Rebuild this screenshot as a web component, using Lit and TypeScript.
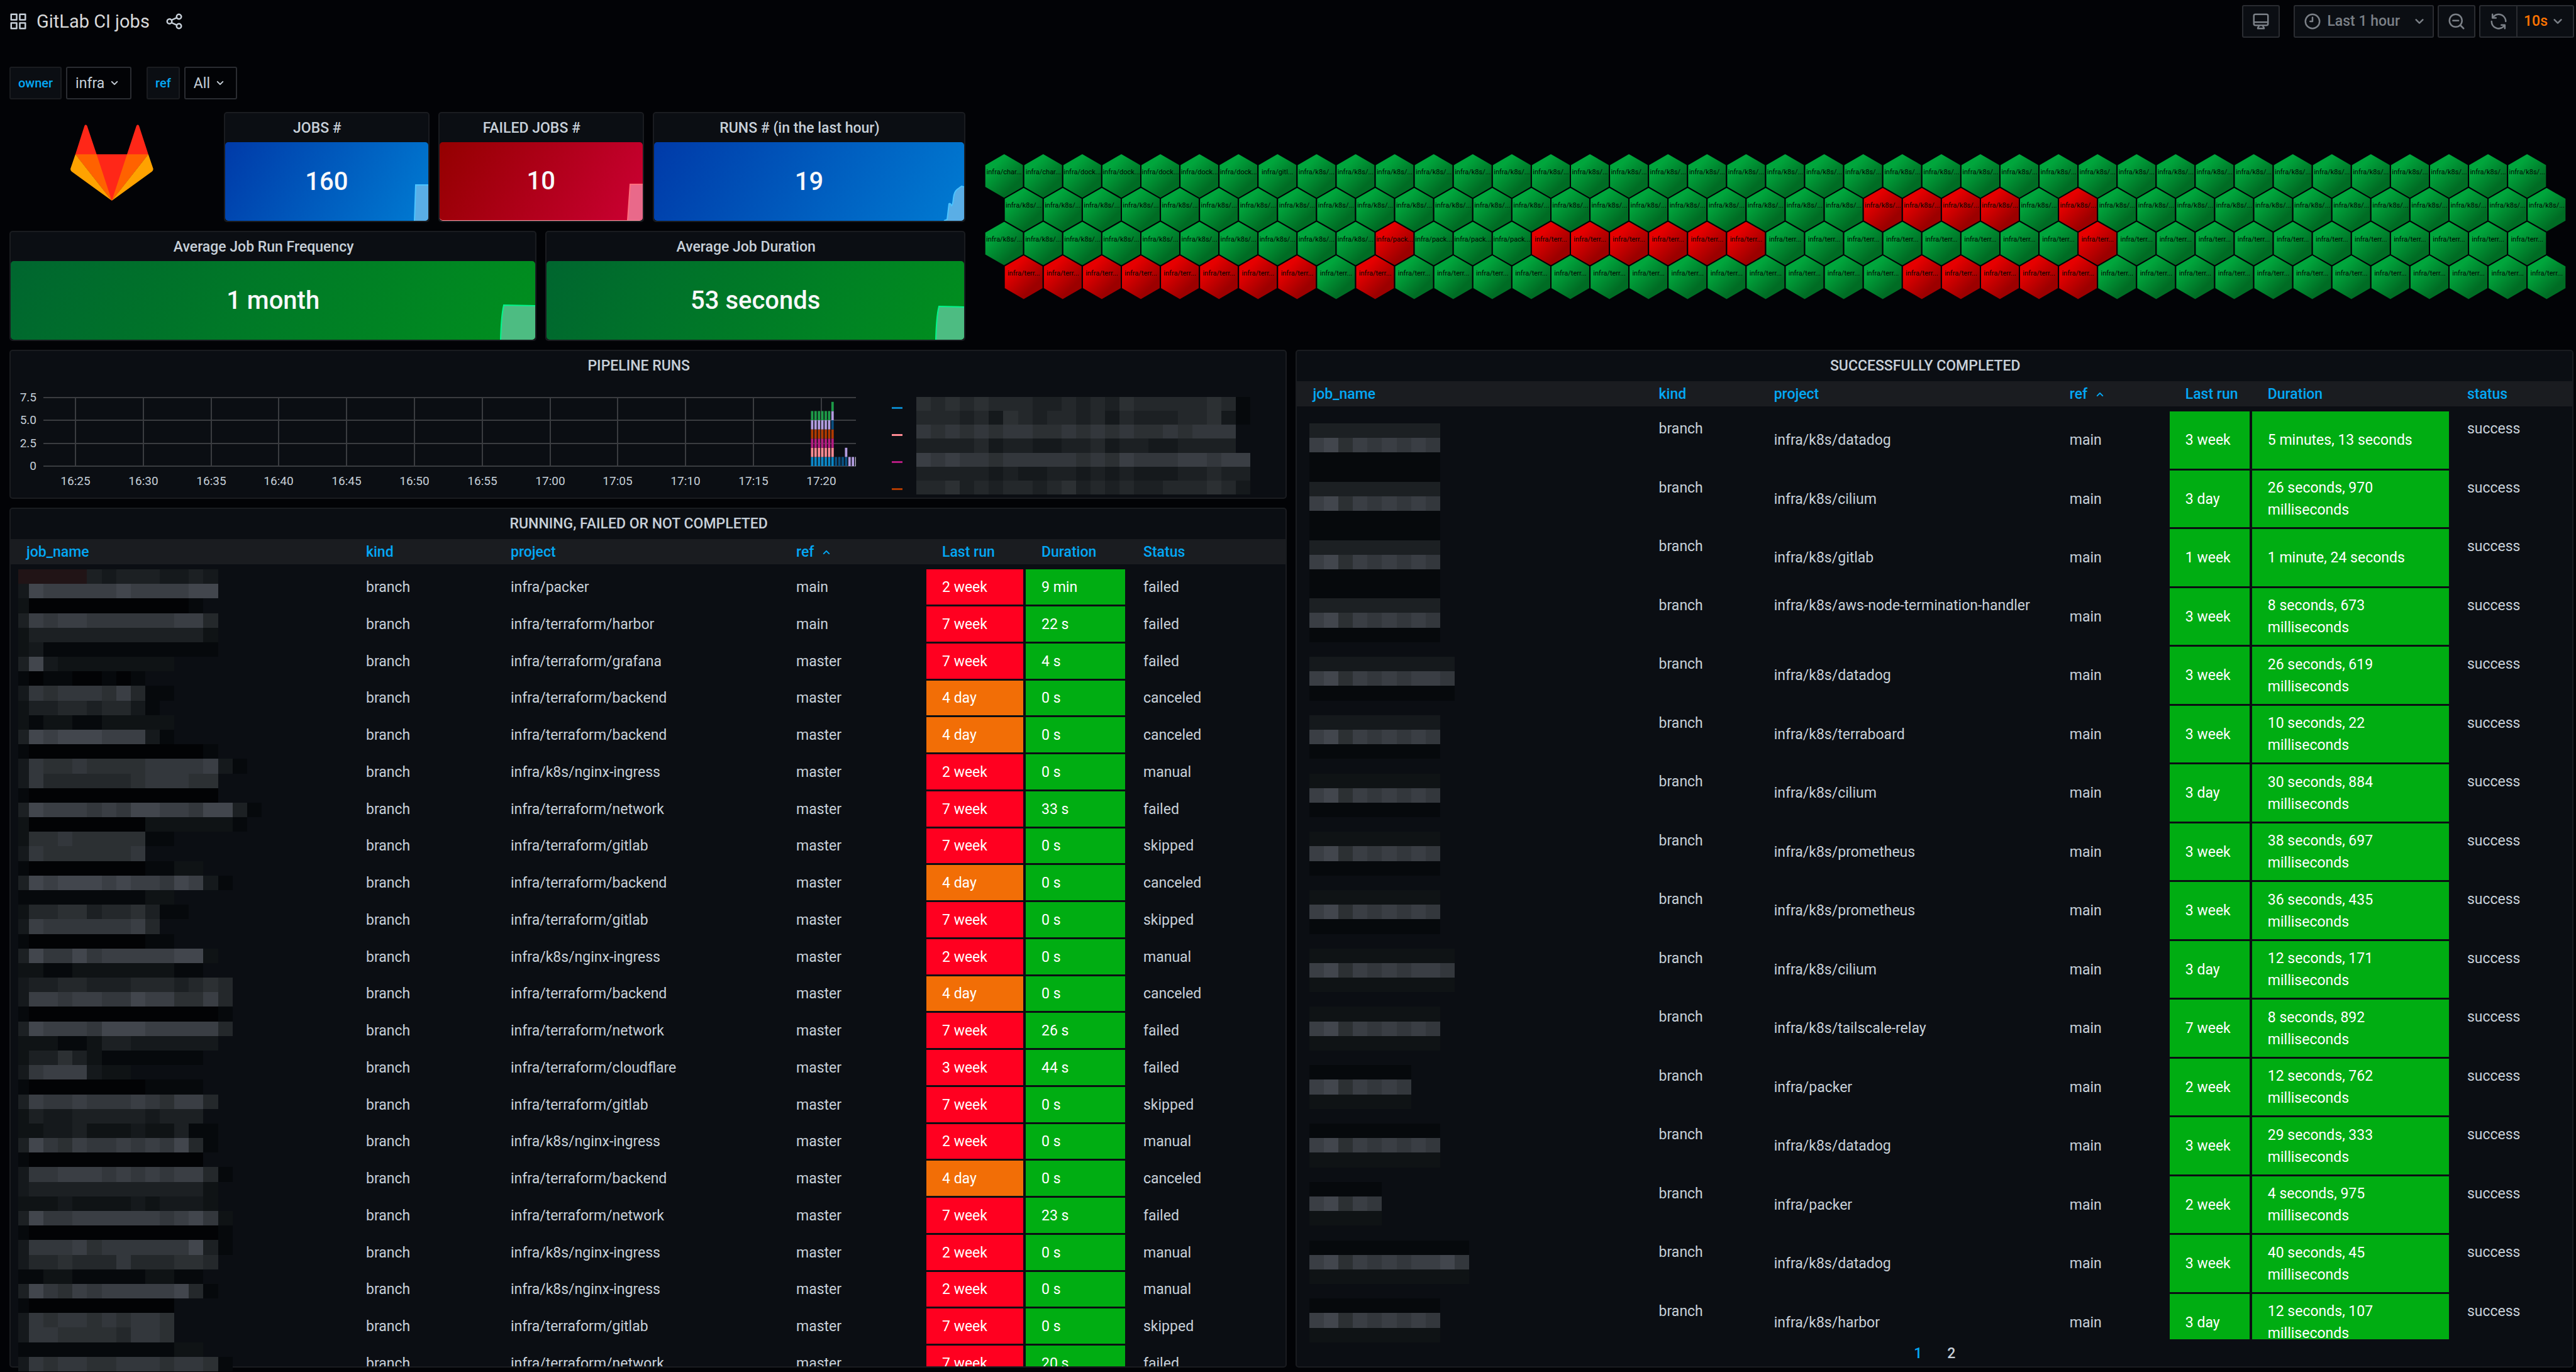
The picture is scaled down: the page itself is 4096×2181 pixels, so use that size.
import { LitElement, html, svg, css, nothing } from "lit";
import { customElement, property } from "lit/decorators.js";
import { classMap } from "lit/directives/class-map.js";
import { styleMap } from "lit/directives/style-map.js";

/* ---------- icons ---------- */

const ICONS: Record<string, unknown> = {
  apps: svg`<path fill="currentColor" d="M10,13H3a1,1,0,0,0-1,1v7a1,1,0,0,0,1,1h7a1,1,0,0,0,1-1V14A1,1,0,0,0,10,13ZM9,20H4V15H9ZM21,2H14a1,1,0,0,0-1,1v7a1,1,0,0,0,1,1h7a1,1,0,0,0,1-1V3A1,1,0,0,0,21,2ZM20,9H15V4h5Zm1,4H14a1,1,0,0,0-1,1v7a1,1,0,0,0,1,1h7a1,1,0,0,0,1-1V14A1,1,0,0,0,21,13Zm-1,7H15V15h5ZM10,2H3A1,1,0,0,0,2,3v7a1,1,0,0,0,1,1h7a1,1,0,0,0,1-1V3A1,1,0,0,0,10,2ZM9,9H4V4H9Z"/>`,
  share: svg`<path fill="currentColor" d="M18,14a4,4,0,0,0-3.08,1.48l-5.1-2.35a3.64,3.64,0,0,0,0-2.26l5.1-2.35A4,4,0,1,0,14,6a4.17,4.17,0,0,0,.07.71L8.79,9.14a4,4,0,1,0,0,5.72l5.28,2.43A4.17,4.17,0,0,0,14,18a4,4,0,1,0,4-4ZM18,4a2,2,0,1,1-2,2A2,2,0,0,1,18,4ZM6,14a2,2,0,1,1,2-2A2,2,0,0,1,6,14Zm12,6a2,2,0,1,1,2-2A2,2,0,0,1,18,20Z"/>`,
  down: svg`<path fill="currentColor" d="M17,9.17a1,1,0,0,0-1.41,0L12,12.71,8.46,9.17a1,1,0,0,0-1.41,0,1,1,0,0,0,0,1.42l4.24,4.24a1,1,0,0,0,1.42,0L17,10.59A1,1,0,0,0,17,9.17Z"/>`,
  up: svg`<path fill="currentColor" d="M17,13.41,12.71,9.17a1,1,0,0,0-1.42,0L7.05,13.41a1,1,0,0,0,0,1.42,1,1,0,0,0,1.41,0L12,11.29l3.54,3.54a1,1,0,0,0,1.41,0A1,1,0,0,0,17,13.41Z"/>`,
  monitor: svg`<g fill="none" stroke="currentColor" stroke-width="2" stroke-linejoin="round"><rect x="3" y="3" width="18" height="14" rx="2"/><path d="M3 13h18M9.5 17.5c0 1.5-1.500 1.500-1.500 3.500h8c0-2-1.500-2-1.500-3.500"/></g>`,
  clock: svg`<g fill="none" stroke="currentColor" stroke-width="2" stroke-linecap="round" stroke-linejoin="round"><circle cx="12" cy="12" r="9"/><path d="M12 7v5H9"/></g>`,
  zoomOut: svg`<g fill="none" stroke="currentColor" stroke-width="2" stroke-linecap="round"><circle cx="11" cy="11" r="8"/><path d="M17 17l4 4M7.500 11h7"/></g>`,
  sync: svg`<path fill="currentColor" d="M19.91,15.51H15.38a1,1,0,0,0,0,2h2.4A8,8,0,0,1,4,12a1,1,0,0,0-2,0,10,10,0,0,0,16.88,7.23V21a1,1,0,0,0,2,0V16.5A1,1,0,0,0,19.91,15.51ZM12,2A10,10,0,0,0,5.12,4.77V3a1,1,0,0,0-2,0V7.5a1,1,0,0,0,1,1h4.5a1,1,0,0,0,0-2H6.22A8,8,0,0,1,20,12a1,1,0,0,0,2,0A10,10,0,0,0,12,2Z"/>`,
};

const icon = (name: string, cls = "icon") =>
  html`<svg class=${cls} viewBox="0 0 24 24" aria-hidden="true">${ICONS[name]}</svg>`;

/* ---------- redacted text, drawn as a block mosaic ---------- */

const SHADES: Record<string, string> = {
  "0": "#020305",
  "1": "#06090c",
  "3": "#0f1315",
  "4": "#15191c",
  "5": "#1c2023",
  "6": "#24282b",
  "7": "#2c3033",
  "8": "#33373c",
  "9": "#3a3e44",
  A: "#42464d",
  r: "#211416",
};

/* The first character of each row is the narrow lead-in cell. */
const JOB_BLOCKS_LEFT = [
  "rrrrr545554454", "4A99999A9999AA", "3000000000001", "59899888888996", "3555555555555 3",
  "34111111111111", "5A433333333", "101100101", "48788879611", "3556656641", "31331133333",
  "5A9AAA99941", "10000000000001", "4877877778888941", "48666666788877", "10000000000000",
  "5A999898AA998AA51", "3000000003333331", "37787777711", "487777778", "1000000001133",
  "5A9AAA9A998A941", "11111111133", "366775667511", "4988888896", "10000000011",
  "5A88A899999AA3", "3311333333311", "455665556665676", "49989988A997796", "100000000000001",
  "5A9998AAA999996", "33311355444444", "3557531111111", "48999433", "1000000001111",
  "59889888987996", "3544555554555", "33445333433511", "5A879889898A61", "1000000000000",
  "488999898989961", "45555555555553", "33343333434443", "5A8899999989A83", "100000000000001",
  "48889788888 8A51", "46676668666776", "1133111113311", "5A879899999A61", "10000000000",
  "48788787887", "48877776887", "1111111111133", "487887788878871",
].map((r) => r.replace(/ /g, ""));

const RIGHT_LENGTHS = [9, 9, 9, 9, 10, 9, 9, 9, 9, 10, 9, 7, 9, 5, 11, 9];
const JOB_BLOCKS_RIGHT = RIGHT_LENGTHS.flatMap((n, i) => {
  const above = i < 4 ? "5" : i < 6 ? "4" : i < 11 ? "3" : "1";
  const below = i < 9 ? "1" : "3";
  return [
    above.repeat(n),
    "9A7989899AA".slice(0, n - 1) + "8",
    below.repeat(n),
    i < 3 ? "1".repeat(n) : "",
  ];
});

const LEGEND_BLOCKS = [
  "76767666556565766666761",
  "66656476566564655566741",
  "8787878877878787787888",
  "5555645544556455445555",
  "98988788888787988899899",
  "55555454455454544455655",
  "66756566567565655666764",
];

const mosaic = (rows: string[], lead: number, cell: number, row: number, cls: string) => {
  const cols = Math.max(...rows.map((r) => r.length));
  const width = lead + (cols - 1) * cell;
  const height = rows.length * row;
  return html`<svg class="mosaic ${cls}" viewBox="0 0 ${width} ${height}" preserveAspectRatio="none"
    style=${styleMap({ width: `${Math.round(width)}px`, height: `${Math.round(height)}px` })} aria-hidden="true">
    ${rows.map((line, y) =>
      [...line].map((c, x) =>
        SHADES[c]
          ? svg`<rect x=${x ? lead + (x - 1) * cell : 0} y=${y * row} width=${x ? cell : lead} height=${row} fill=${SHADES[c]}/>`
          : nothing
      )
    )}
  </svg>`;
};

/* ---------- stat panels ---------- */

interface Stat {
  title: string;
  value: string;
  tone: "blue" | "red" | "green";
  span: string;
  area: string;
  baseline?: boolean;
}

const STATS: Stat[] = [
  { title: "JOBS #", value: "160", tone: "blue", span: "jobs", area: "M38 58L40 1H60" },
  { title: "FAILED JOBS #", value: "10", tone: "red", span: "failed", area: "M36 58L40 1H60", baseline: true },
  { title: "RUNS # (in the last hour)", value: "19", tone: "blue", span: "runs", area: "M28 58L33 56L36 31Q38 29 40 34Q42 33 43 22Q44 12 49 8L56 3L60 4" },
  { title: "Average Job Run Frequency", value: "1 month", tone: "green", span: "frequency", area: "M5 58Q6 20 10 3L60 4" },
  { title: "Average Job Duration", value: "53 seconds", tone: "green", span: "duration", area: "M15 58Q16 20 20 5L60 6" },
];

/* ---------- honeycomb ---------- */

const PER_ROW = 40;
const FAILED_CELLS: number[][] = [
  [],
  [22, 23, 24, 25, 27],
  [10, 14, 15, 16, 17, 18, 19, 28],
  [0, 1, 2, 3, 4, 5, 6, 7, 9, 23, 24, 25, 26, 27],
];
const hexLabel = (row: number, i: number) => {
  const n = row * PER_ROW + i;
  if (n < 2) return "infra/char...";
  if (n < 7) return "infra/dock...";
  if (n < 8) return "infra/gitl...";
  if (n < 90) return "infra/k8s/...";
  if (n < 94) return "infra/pack...";
  return "infra/terr...";
};

/* ---------- pipeline chart ---------- */

const SERIES: Record<string, string> = {
  b: "#0b86c6",
  p: "#ff8a93",
  m: "#b41c80",
  o: "#b03a00",
  d: "#0a4f80",
  v: "#b29cdf",
  g: "#1d9b48",
  w: "#c7c4d6",
};
const BARS = ["bpmovg", "bpmovg", "bpmovg", "bpmovg", "bpmovg", "bpmovg", "bpmodvg", "d", "d", "d", "dv", "v", "v", "w"];
const TIMES = ["16:25", "16:30", "16:35", "16:40", "16:45", "16:50", "16:55", "17:00", "17:05", "17:10", "17:15", "17:20"];

/* ---------- tables ---------- */

interface Column {
  label: string;
  width: number;
  sorted?: boolean;
}

const RUNNING_COLUMNS: Column[] = [
  { label: "job_name", width: 540 },
  { label: "kind", width: 230 },
  { label: "project", width: 454 },
  { label: "ref", width: 232, sorted: true },
  { label: "Last run", width: 158 },
  { label: "Duration", width: 162 },
  { label: "Status", width: 252 },
];

const DONE_COLUMNS: Column[] = [
  { label: "job_name", width: 550 },
  { label: "kind", width: 183 },
  { label: "project", width: 470 },
  { label: "ref", width: 184, sorted: true },
  { label: "Last run", width: 131 },
  { label: "Duration", width: 317 },
  { label: "status", width: 192 },
];

type Row = [project: string, ref: string, last: string, duration: string, status: string];

const RUNNING: Row[] = [
  ["infra/packer", "main", "2 week", "9 min", "failed"],
  ["infra/terraform/harbor", "main", "7 week", "22 s", "failed"],
  ["infra/terraform/grafana", "master", "7 week", "4 s", "failed"],
  ["infra/terraform/backend", "master", "4 day", "0 s", "canceled"],
  ["infra/terraform/backend", "master", "4 day", "0 s", "canceled"],
  ["infra/k8s/nginx-ingress", "master", "2 week", "0 s", "manual"],
  ["infra/terraform/network", "master", "7 week", "33 s", "failed"],
  ["infra/terraform/gitlab", "master", "7 week", "0 s", "skipped"],
  ["infra/terraform/backend", "master", "4 day", "0 s", "canceled"],
  ["infra/terraform/gitlab", "master", "7 week", "0 s", "skipped"],
  ["infra/k8s/nginx-ingress", "master", "2 week", "0 s", "manual"],
  ["infra/terraform/backend", "master", "4 day", "0 s", "canceled"],
  ["infra/terraform/network", "master", "7 week", "26 s", "failed"],
  ["infra/terraform/cloudflare", "master", "3 week", "44 s", "failed"],
  ["infra/terraform/gitlab", "master", "7 week", "0 s", "skipped"],
  ["infra/k8s/nginx-ingress", "master", "2 week", "0 s", "manual"],
  ["infra/terraform/backend", "master", "4 day", "0 s", "canceled"],
  ["infra/terraform/network", "master", "7 week", "23 s", "failed"],
  ["infra/k8s/nginx-ingress", "master", "2 week", "0 s", "manual"],
  ["infra/k8s/nginx-ingress", "master", "2 week", "0 s", "manual"],
  ["infra/terraform/gitlab", "master", "7 week", "0 s", "skipped"],
  ["infra/terraform/network", "master", "7 week", "20 s", "failed"],
];

const DONE: Row[] = [
  ["infra/k8s/datadog", "main", "3 week", "5 minutes, 13 seconds", "success"],
  ["infra/k8s/cilium", "main", "3 day", "26 seconds, 970 milliseconds", "success"],
  ["infra/k8s/gitlab", "main", "1 week", "1 minute, 24 seconds", "success"],
  ["infra/k8s/aws-node-termination-handler", "main", "3 week", "8 seconds, 673 milliseconds", "success"],
  ["infra/k8s/datadog", "main", "3 week", "26 seconds, 619 milliseconds", "success"],
  ["infra/k8s/terraboard", "main", "3 week", "10 seconds, 22 milliseconds", "success"],
  ["infra/k8s/cilium", "main", "3 day", "30 seconds, 884 milliseconds", "success"],
  ["infra/k8s/prometheus", "main", "3 week", "38 seconds, 697 milliseconds", "success"],
  ["infra/k8s/prometheus", "main", "3 week", "36 seconds, 435 milliseconds", "success"],
  ["infra/k8s/cilium", "main", "3 day", "12 seconds, 171 milliseconds", "success"],
  ["infra/k8s/tailscale-relay", "main", "7 week", "8 seconds, 892 milliseconds", "success"],
  ["infra/packer", "main", "2 week", "12 seconds, 762 milliseconds", "success"],
  ["infra/k8s/datadog", "main", "3 week", "29 seconds, 333 milliseconds", "success"],
  ["infra/packer", "main", "2 week", "4 seconds, 975 milliseconds", "success"],
  ["infra/k8s/datadog", "main", "3 week", "40 seconds, 45 milliseconds", "success"],
  ["infra/k8s/harbor", "main", "3 day", "12 seconds, 107 milliseconds", "success"],
];

@customElement("jobs-table")
class JobsTable extends LitElement {
  @property({ attribute: false }) columns: Column[] = [];
  @property({ attribute: false }) rows: Row[] = [];
  @property({ type: Boolean }) tall = false;

  static styles = css`
    :host {
      display: block;
    }
    .table {
      width: 100%;
      table-layout: fixed;
      border-collapse: separate;
      border-spacing: 0;
      font-size: 23px;
      line-height: 35px;
      color: #c7d0d9;
    }
    .table th,
    .table td {
      box-sizing: border-box;
      padding: 0 0 0 25px;
      text-align: left;
      background-clip: padding-box;
    }
    .table th {
      height: 48px;
      padding-top: 2px;
      border-bottom: 8px solid transparent;
      background-color: #1a1c20;
      font-weight: 500;
      color: #04a8f5;
    }
    .sort {
      display: flex;
      align-items: center;
      gap: 8px;
      padding: 0;
      border: 0;
      background: none;
      font: inherit;
      line-height: 38px;
      color: inherit;
    }
    .arrow {
      width: 24px;
      height: 24px;
    }
    .table td {
      height: 59px;
      border: solid transparent;
      border-width: 0 4px 3px 0;
      vertical-align: middle;
    }
    .short tr:nth-child(4n) td {
      height: 58px;
    }
    .tall td {
      height: 94px;
    }
    .tall tr:nth-child(2n) td {
      height: 93px;
    }
    .tall .upper {
      padding-top: 10px;
      vertical-align: top;
    }
    .table .red,
    .table .orange,
    .table .green {
      color: #fff;
    }
    .red {
      background-color: #ff0020;
    }
    .orange {
      background-color: #f26e06;
    }
    .green {
      background-color: #00ad12;
    }
  `;

  render() {
    return html`<table class="table ${this.tall ? "tall" : "short"}">
      <colgroup>
        ${this.columns.map((c) => html`<col style=${styleMap({ width: `${c.width}px` })} />`)}
      </colgroup>
      <thead>
        <tr>
          ${this.columns.map(
            (c) => html`<th scope="col">
              <button class="sort" type="button">${c.label}${c.sorted ? icon("up", "arrow") : nothing}</button>
            </th>`
          )}
        </tr>
      </thead>
      <tbody>
        ${this.rows.map(([project, ref, last, duration, status]) => {
          const tone = this.tall ? "green" : last.endsWith("day") ? "orange" : "red";
          return html`<tr>
            <td></td>
            <td class="upper">branch</td>
            <td class=${classMap({ upper: project.length > 30 })}>${project}</td>
            <td>${ref}</td>
            <td class=${tone}>${last}</td>
            <td class="green">${duration}</td>
            <td class="upper">${status}</td>
          </tr>`;
        })}
      </tbody>
    </table>`;
  }
}

@customElement("app-root")
class AppRoot extends LitElement {
  static styles = css`
    :host {
      display: block;
      font-family: Roboto, "Liberation Sans", sans-serif;
      font-size: 23px;
      line-height: 35px;
      color: #c7d0d9;
    }
    * {
      box-sizing: border-box;
    }
    button,
    select {
      font: inherit;
      color: inherit;
    }
    .page {
      display: flex;
      flex-direction: column;
      height: 100vh;
      overflow: hidden;
      background: #020306;
    }
    .icon {
      flex: none;
      width: 30px;
      height: 30px;
    }

    /* toolbar */
    .toolbar {
      display: flex;
      align-items: center;
      justify-content: space-between;
      height: 67px;
      padding: 0 3px 0 14px;
    }
    .heading {
      display: flex;
      align-items: center;
    }
    .title {
      margin: 0 24px 0 14px;
      font-size: 29px;
      font-weight: 400;
      line-height: 36px;
      color: #d8d9da;
    }
    .bare {
      display: flex;
      padding: 0;
      border: 0;
      background: none;
    }
    .actions {
      display: flex;
      gap: 6px;
      color: #7b8087;
      font-weight: 500;
    }
    .button {
      display: flex;
      align-items: center;
      justify-content: center;
      gap: 8px;
      height: 52px;
      min-width: 59px;
      padding: 0 13px;
      border: 2px solid #2a2c31;
      border-radius: 3px;
      background: #0b0e13;
    }
    .monitor {
      margin-right: 16px;
    }
    .picker {
      padding: 0 6px 0 13px;
    }
    .picker .chevron {
      margin-left: 8px;
    }
    .split {
      display: flex;
    }
    .split .button:first-child {
      border-right: 0;
      border-radius: 3px 0 0 3px;
    }
    .split .button:last-child {
      gap: 1px;
      padding: 0 9px 0 10px;
      border-radius: 0 3px 3px 0;
    }
    .interval {
      color: #ff7400;
    }
    .chevron {
      width: 30px;
      height: 30px;
    }

    /* variables */
    .variables {
      display: flex;
      gap: 24px;
      padding: 39px 0 20px 15px;
    }
    .variable {
      display: flex;
      gap: 7px;
    }
    .name {
      height: 52px;
      padding: 0 12px;
      border: 2px solid #1a1c20;
      border-radius: 3px;
      background: #0b0e13;
      font-size: 20px;
      font-weight: 500;
      line-height: 48px;
      color: #04a8f5;
    }
    .choice {
      display: grid;
      align-items: center;
    }
    .choice > * {
      grid-area: 1 / 1;
    }
    .select {
      appearance: none;
      height: 52px;
      padding: 0 40px 0 13px;
      border: 2px solid #2a2c31;
      border-radius: 3px;
      background: transparent;
    }
    .caret {
      justify-self: end;
      width: 24px;
      height: 24px;
      margin-right: 15px;
      pointer-events: none;
    }

    /* dashboard grid */
    .grid {
      flex: 1;
      min-height: 0;
      display: grid;
      grid-template-columns: repeat(24, minmax(0, 1fr));
      grid-template-rows: 175px 175px 237px minmax(0, 1fr);
      gap: 14px;
      padding: 0 4px 7px 15px;
    }
    .logo {
      grid-area: 1 / 1 / 2 / 3;
      display: flex;
      justify-content: center;
      align-items: flex-start;
      padding-top: 20px;
    }
    .fox {
      width: 132px;
      height: 121px;
    }
    .jobs {
      grid-area: 1 / 3 / 2 / 5;
    }
    .failed {
      grid-area: 1 / 5 / 2 / 7;
    }
    .runs {
      grid-area: 1 / 7 / 2 / 10;
    }
    .frequency {
      grid-area: 2 / 1 / 3 / 6;
    }
    .duration {
      grid-area: 2 / 6 / 3 / 10;
    }
    .honeycomb {
      grid-area: 1 / 10 / 3 / 25;
      width: 100%;
      height: 100%;
      min-height: 0;
    }
    .pipeline {
      grid-area: 3 / 1 / 4 / 13;
    }
    .running {
      grid-area: 4 / 1 / 5 / 13;
    }
    .done {
      grid-area: 3 / 13 / 5 / 25;
    }

    /* panels */
    .panel {
      position: relative;
      display: flex;
      flex-direction: column;
      min-height: 0;
      border: 2px solid #1a1c20;
      border-radius: 5px;
      background: #0b0e13;
    }
    .caption {
      flex: none;
      margin: 0;
      height: 46px;
      padding-right: 30px;
      font-size: 23px;
      font-weight: 500;
      line-height: 48px;
      text-align: center;
    }
    .stat {
      position: relative;
      flex: 1;
      display: flex;
      align-items: center;
      justify-content: center;
      overflow: hidden;
      border-radius: 5px;
      font-size: 40px;
      font-weight: 500;
      line-height: 48px;
      color: #f7f8fa;
    }
    .stat.blue {
      background: linear-gradient(120deg, #003aa8, #007bd2);
      --line: #4cc4ff;
      --fill: #5aaee6;
    }
    .stat.red {
      background: linear-gradient(120deg, #940000, #cb0033);
      --line: #ff6f7d;
      --fill: #e9698a;
    }
    .stat.green {
      background: linear-gradient(120deg, #00662f, #008f1e);
      --line: #00f78c;
      --fill: #4dbc82;
    }
    .spark {
      position: absolute;
      right: 0;
      bottom: 0;
      width: 60px;
      height: 58px;
    }
    .baseline {
      border-bottom: 1px solid #ff9aa4;
    }

    /* honeycomb */
    .cell {
      stroke: #020306;
      stroke-width: 2;
    }
    .cell-text {
      font-size: 11px;
      fill: #000600;
      text-anchor: middle;
    }

    /* pipeline */
    .plot {
      flex: 1;
      min-height: 0;
      display: flex;
    }
    .chart {
      flex: none;
      width: 69%;
      height: 100%;
    }
    .gridline {
      stroke: #3a3c40;
      stroke-width: 2;
      shape-rendering: crispEdges;
    }
    .tick {
      font-size: 19px;
      fill: #c7d0d9;
    }
    .legend {
      display: flex;
      align-items: flex-start;
      gap: 22px;
      margin: 0;
      padding: 23px 0 0 2px;
      min-height: 0;
      overflow: hidden;
    }
    .keys {
      display: flex;
      flex-direction: column;
      margin: 0;
      padding: 0;
      list-style: none;
    }
    .key {
      display: flex;
      align-items: center;
      height: 43px;
    }
    .dash {
      width: 17px;
      height: 3px;
    }

    /* tables */
    .body {
      flex: 1;
      min-height: 0;
      margin-top: 2px;
      overflow: hidden;
    }
    .pages {
      flex: none;
      display: flex;
      justify-content: center;
      height: 43px;
    }
    .page-number {
      padding: 2px 20px 0;
      border: 0;
      background: none;
      font-weight: 500;
    }
    .current {
      color: #04a8f5;
    }

    .mosaic {
      flex: none;
      shape-rendering: crispEdges;
    }
    .mosaic.left {
      position: absolute;
      left: 12px;
      top: 96px;
    }
    .mosaic.right {
      position: absolute;
      left: 20px;
      top: 115px;
    }
    .mosaic.names {
      margin-top: 4px;
    }
  `;

  private toolbar() {
    return html`<header class="toolbar">
      <div class="heading">
        ${icon("apps")}
        <h1 class="title">GitLab CI jobs</h1>
        <button class="bare" type="button" aria-label="Share dashboard">${icon("share")}</button>
      </div>
      <div class="actions">
        <button class="button monitor" type="button" aria-label="Cycle view mode">${icon("monitor")}</button>
        <button class="button picker" type="button">
          ${icon("clock")}<span>Last 1 hour</span>${icon("down", "chevron")}
        </button>
        <button class="button" type="button" aria-label="Zoom out">${icon("zoomOut")}</button>
        <div class="split">
          <button class="button" type="button" aria-label="Refresh">${icon("sync")}</button>
          <button class="button" type="button"><span class="interval">10s</span>${icon("down", "chevron")}</button>
        </div>
      </div>
    </header>`;
  }

  private variable(name: string, value: string) {
    return html`<div class="variable">
      <label class="name" for=${name}>${name}</label>
      <div class="choice">
        <select class="select" id=${name}>
          <option>${value}</option>
        </select>
        ${icon("down", "caret")}
      </div>
    </div>`;
  }

  private logo() {
    return html`<div class="logo">
      <svg class="fox" viewBox="0 0 132 121" role="img" aria-label="GitLab">
        <path fill="#ff2718" d="M7.900 47.300L22.400 1.800Q24.200-1.500 26.400 1.800L41.600 47.300H90L105 1.800Q107-1.500 109 1.800L123.800 47.300L65.800 121Z" />
        <path fill="#ff6200" d="M7.900 47.300H41.600L65.800 121ZM123.800 47.300H90L65.800 121Z" />
        <path fill="#ffa200" d="M7.900 47.300L.3 69.500Q-.6 72.500 2 74.800L65.800 121ZM123.800 47.300L131.400 69.500Q132.300 72.500 129.600 74.800L65.800 121Z" />
      </svg>
    </div>`;
  }

  private stat(s: Stat) {
    return html`<section class="panel ${s.span}">
      <h2 class="caption">${s.title}</h2>
      <div class=${classMap({ stat: true, [s.tone]: true, baseline: !!s.baseline })}>
        <span>${s.value}</span>
        <svg class="spark" viewBox="0 0 60 58" aria-hidden="true">
          <path d="${s.area}V58Z" fill="var(--fill)" />
          <path d=${s.area} fill="none" stroke="var(--line)" stroke-width="2" />
        </svg>
      </div>
    </section>`;
  }

  private honeycomb() {
    const pitch = 62.09;
    const rowPitch = 53.7;
    const r = 35.8;
    const half = pitch / 2;
    return html`<svg class="honeycomb" viewBox="0 0 2540 364" preserveAspectRatio="xMinYMin meet">
      <defs>
        <linearGradient id="ok" x1="0.2" y1="0.15" x2="0.8" y2="0.85">
          <stop offset="0.15" stop-color="#00a63c" />
          <stop offset="0.85" stop-color="#006c24" />
        </linearGradient>
        <linearGradient id="bad" x1="0.2" y1="0.15" x2="0.8" y2="0.85">
          <stop offset="0.15" stop-color="#e60000" />
          <stop offset="0.85" stop-color="#9c0000" />
        </linearGradient>
      </defs>
      ${FAILED_CELLS.map((failed, row) =>
        Array.from({ length: PER_ROW }, (_, i) => {
          const cx = 47.7 + i * pitch + (row % 2 ? half : 0);
          const cy = 101.7 + row * rowPitch;
          const points = [
            [0, -r], [half, -r / 2], [half, r / 2], [0, r], [-half, r / 2], [-half, -r / 2],
          ]
            .map(([x, y]) => `${(cx + x).toFixed(1)},${(cy + y).toFixed(1)}`)
            .join(" ");
          return svg`<polygon class="cell" points=${points} fill=${failed.includes(i) ? "url(#bad)" : "url(#ok)"}/>
            <text class="cell-text" x=${cx.toFixed(1)} y=${(cy - 3).toFixed(1)}>${hexLabel(row, i)}</text>`;
        })
      )}
    </svg>`;
  }

  private pipeline() {
    const zero = 137;
    const unit = 14.6;
    return html`<section class="panel pipeline">
      <h2 class="caption">PIPELINE RUNS</h2>
      <div class="plot">
        <svg class="chart" viewBox="0 0 1345 187" preserveAspectRatio="xMinYMin meet">
          ${["7.5", "5.0", "2.5", "0"].map((label, i) => {
            const y = 28 + Math.round(i * 36.4);
            return svg`<line class="gridline" x1="52" x2="1344" y1=${y} y2=${y}/>
              <text class="tick" x="41" y=${y + 6} text-anchor="end">${label}</text>`;
          })}
          ${TIMES.map((label, i) => {
            const x = 103 + Math.round(i * 107.8);
            return svg`<line class="gridline" x1=${x} x2=${x} y1="28" y2="137"/>
              <text class="tick" x=${x} y="167" text-anchor="middle">${label}</text>`;
          })}
          ${BARS.map((stack, i) =>
            [...stack].map(
              (s, level) =>
                svg`<rect x=${1272.5 + i * 5.4} y=${zero - (level + 1) * unit} width=${i === 13 ? 1.2 : 3.8} height=${unit} fill=${SERIES[s]}/>`
            )
          )}
        </svg>
        <div class="legend">
          <ul class="keys">
            ${["b", "p", "m", "o"].map(
              (k) => html`<li class="key"><span class="dash" style=${styleMap({ background: SERIES[k] })}></span></li>`
            )}
          </ul>
          ${mosaic(LEGEND_BLOCKS, 23, 23.1, 22.15, "names")}
        </div>
      </div>
    </section>`;
  }

  render() {
    return html`<div class="page">
      ${this.toolbar()}
      <nav class="variables">${this.variable("owner", "infra")}${this.variable("ref", "All")}</nav>
      <main class="grid">
        ${this.logo()} ${STATS.map((s) => this.stat(s))} ${this.honeycomb()} ${this.pipeline()}
        <section class="panel running">
          <h2 class="caption">RUNNING, FAILED OR NOT COMPLETED</h2>
          <div class="body"><jobs-table .columns=${RUNNING_COLUMNS} .rows=${RUNNING}></jobs-table></div>
          ${mosaic(JOB_BLOCKS_LEFT, 17, 23.13, 23.19, "left")}
        </section>
        <section class="panel done">
          <h2 class="caption">SUCCESSFULLY COMPLETED</h2>
          <div class="body"><jobs-table tall .columns=${DONE_COLUMNS} .rows=${DONE}></jobs-table></div>
          <nav class="pages">
            <button class="page-number current" type="button">1</button>
            <button class="page-number" type="button">2</button>
          </nav>
          ${mosaic(JOB_BLOCKS_RIGHT, 23.13, 23.13, 23.19, "right")}
        </section>
      </main>
    </div>`;
  }
}
